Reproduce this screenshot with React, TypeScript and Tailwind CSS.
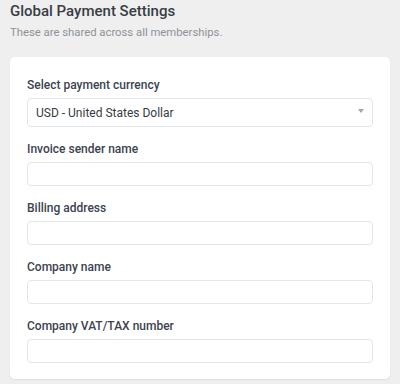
import React from "react";

function Field({ label }: { label: string }) {
  return (
    <div className="flex flex-col">
      <label className="text-[12px] leading-[16px] font-medium text-[#3c4350]">{label}</label>
      <input
        type="text"
        className="mt-[5px] h-[24px] w-full rounded-[4px] border border-[#e2e5ea] bg-white px-[8px] text-[12px] outline-none"
      />
    </div>
  );
}

export default function App() {
  return (
    <div className="w-[400px] h-[384px] bg-[#efefef] px-[10px] pt-[1px] font-[Roboto,sans-serif]">
      <h2 className="text-[15px] leading-[20px] font-medium text-[#383d45]">Global Payment Settings</h2>
      <p className="mt-[4px] text-[11.3px] leading-[16px] text-[#8d929a]">These are shared across all memberships.</p>
      <div className="mt-[16px] flex flex-col gap-[14px] rounded-[5px] bg-white px-[17px] pt-[20px] pb-[16px] shadow-[0_1px_2px_rgba(0,0,0,0.07)]">
        <div className="flex flex-col">
          <label className="text-[12px] leading-[16px] font-medium text-[#3c4350]">Select payment currency</label>
          <div className="mt-[5px] h-[29px] rounded-[4px] border border-[#e2e5ea] bg-white flex items-center justify-between pl-[8px] pr-[8px]">
            <span className="text-[12px] text-[#363b43]">USD - United States Dollar</span>
            <svg width="6" height="4" viewBox="0 0 6 4" className="mb-[3px]">
              <path d="M0 0h6L3 4z" fill="#a2a7ae" />
            </svg>
          </div>
        </div>
        <Field label="Invoice sender name" />
        <Field label="Billing address" />
        <Field label="Company name" />
        <Field label="Company VAT/TAX number" />
      </div>
    </div>
  );
}
